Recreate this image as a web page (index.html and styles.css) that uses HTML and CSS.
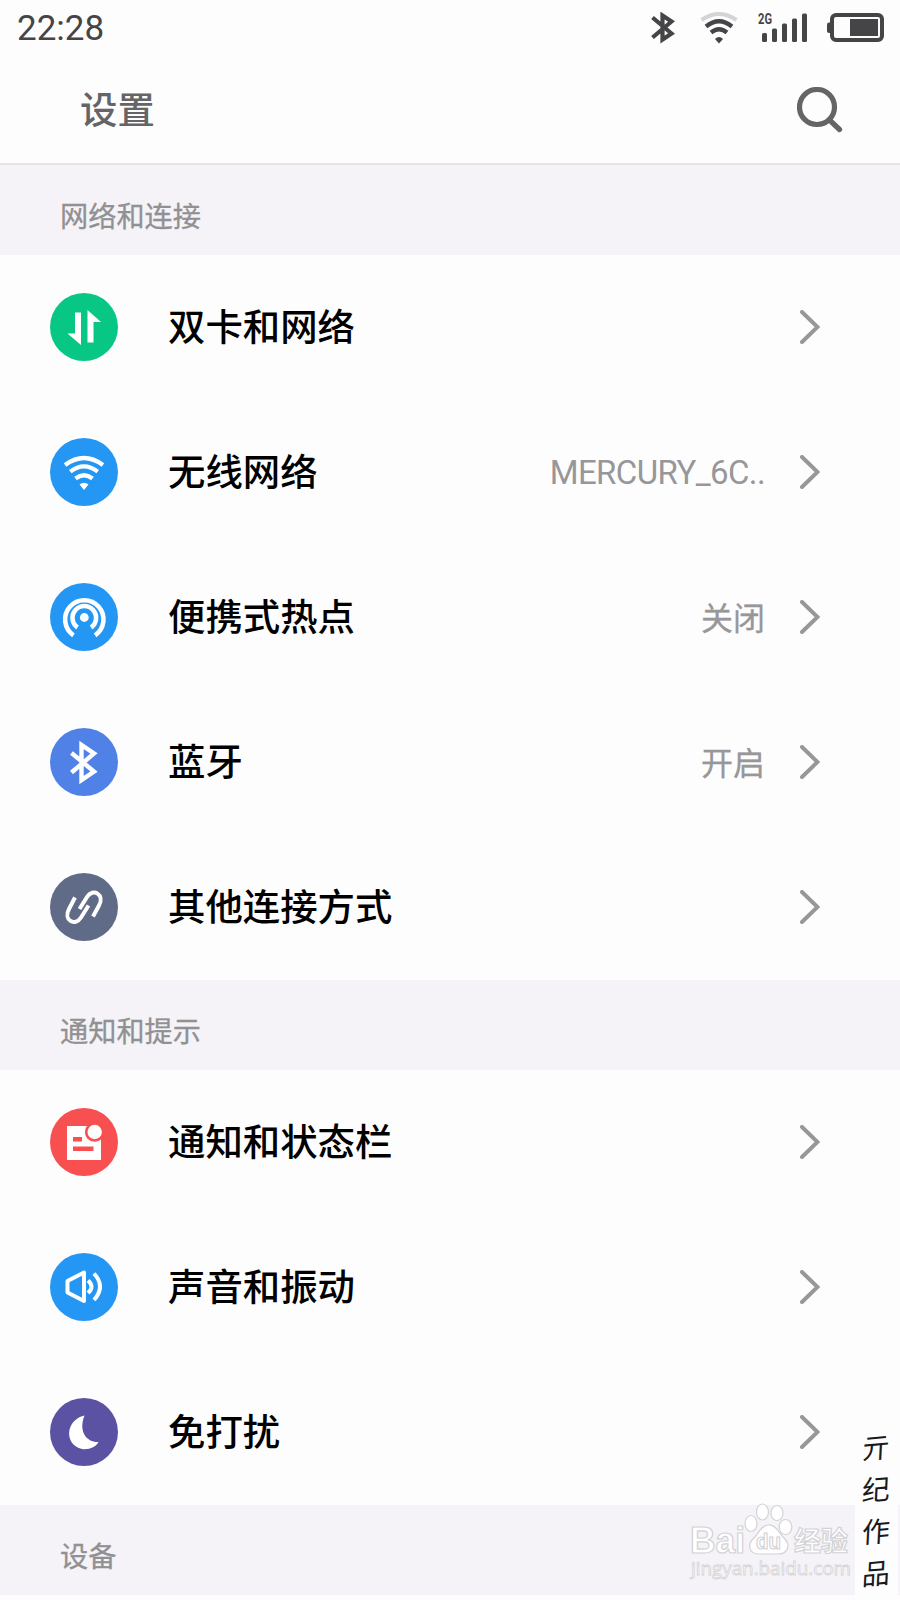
FILE: index.html
```html
<!DOCTYPE html>
<html lang="zh-CN">
<head>
<meta charset="utf-8">
<title>设置</title>
<link rel="stylesheet" href="styles.css">
</head>
<body>
<svg class="defs" width="0" height="0">
  <symbol id="chevron" viewBox="0 0 20 34"><path d="M2 2 17.500 17 2 32" fill="none" stroke="#979799" stroke-width="4" stroke-linecap="round"/></symbol>
</svg>
<div class="screen">
  <header class="top">
    <div class="status">
      <span class="clock">22:28</span>
      <div class="status-icons">
        <svg class="s-bt" width="24" height="32" viewBox="0 0 24 32"><path d="M1.500 5.500 20.500 21.500 11.500 27.500V3.500L20.500 9.500 1.500 25.500" fill="none" stroke="#454446" stroke-width="4.200"/></svg>
        <svg class="s-wifi" width="38" height="32" viewBox="0 0 38 32" fill="none"><path d="M1.500 8Q19 -4 36.500 8" stroke="#d4d3d5" stroke-width="4"/><path d="M6 14.500Q19 4 32 14.500M11 20.500Q19 14 27 20.500" stroke="#454446" stroke-width="4.300"/><path d="M15 27Q19 23 23 27L19 31.500Z" fill="#454446"/></svg>
        <svg class="s-signal" width="50" height="30" viewBox="0 0 50 30"><text x="0" y="10.500" class="net" textLength="14" lengthAdjust="spacingAndGlyphs">2G</text><g fill="#454446"><rect x="4" y="20" width="5" height="9" rx="1.500"/><rect x="14" y="15.500" width="5" height="13.500" rx="1.500"/><rect x="24" y="10.500" width="5" height="18.500" rx="1.500"/><rect x="34" y="5.500" width="5" height="23.500" rx="1.500"/><rect x="44" y="0.500" width="5" height="28.500" rx="1.500"/></g></svg>
        <svg class="s-battery" width="57" height="30" viewBox="0 0 57 30"><rect x="0" y="9.500" width="5" height="10.500" rx="2" fill="#454446"/><rect x="5" y="2" width="50" height="25" rx="4" fill="none" stroke="#454446" stroke-width="4"/><rect x="23" y="6" width="28" height="17" fill="#454446"/></svg>
      </div>
    </div>
    <div class="titlebar">
      <h1>设置</h1>
      <svg width="46" height="46" viewBox="0 0 46 46" fill="none" stroke="#656466" stroke-width="5.200"><circle cx="20" cy="20" r="17.500"/><path d="M32.500 33 42.500 42.500" stroke-linecap="round"/></svg>
    </div>
  </header>

  <h2 class="section">网络和连接</h2>
  <ul class="list">
    <li class="row"><svg class="icon green" viewBox="0 0 68 68" fill="#fff"><path d="M25 19.500H31V52L17.500 40.500H25Z"/><path d="M37.500 17 51 29H43.500V49.500H37.500Z"/></svg><span class="name">双卡和网络</span><svg class="chev"><use href="#chevron"/></svg></li>
    <li class="row"><svg class="icon blue" viewBox="0 0 68 68" fill="none" stroke="#fff" stroke-width="4.200"><path d="M15 27Q34 13 53 27M20.300 33.700Q34 23 47.700 33.700M25.500 40.500Q34 34 42.500 40.500"/><path d="M29.500 46.500Q34 43 38.500 46.500L34 52Z" fill="#fff" stroke="none"/></svg><span class="name">无线网络</span><span class="value latin">MERCURY_6C..</span><svg class="chev"><use href="#chevron"/></svg></li>
    <li class="row"><svg class="icon blue" viewBox="0 0 68 68" fill="none" stroke="#fff"><circle cx="34.300" cy="34.500" r="4.400" fill="#fff" stroke="none"/><path d="M23.500 52.300A19.200 19.200 0 1 1 45.100 52.300" stroke-width="4.600"/><path d="M27.500 44.500A11.800 11.800 0 1 1 41.100 44.500" stroke-width="4.600"/></svg><span class="name">便携式热点</span><span class="value">关闭</span><svg class="chev"><use href="#chevron"/></svg></li>
    <li class="row"><svg class="icon indigo" viewBox="0 0 68 68" fill="none" stroke="#fff" stroke-width="4.400"><path d="M21.500 25 44 43.500 31.500 52V17L44 25.500 21.500 44.500"/></svg><span class="name">蓝牙</span><span class="value">开启</span><svg class="chev"><use href="#chevron"/></svg></li>
    <li class="row"><svg class="icon slate" viewBox="0 0 68 68" fill="none" stroke="#fff" stroke-width="4"><path d="M25 24.500 19 36C13 47 25 54 31 44.500L38.500 32.500"/><path d="M43 43.500 49 32.500C55 21.500 43 14.500 37 24L29.500 36"/></svg><span class="name">其他连接方式</span><svg class="chev"><use href="#chevron"/></svg></li>
  </ul>

  <h2 class="section">通知和提示</h2>
  <ul class="list">
    <li class="row"><svg class="icon red" viewBox="0 0 68 68" fill="#fff"><path d="M17 18H51V52H17Z"/><path d="M38 17H53V31H48A9.500 9.500 0 0 1 38 17Z" fill="#f84f51"/><circle cx="44.700" cy="24" r="8.500" stroke="#f84f51" stroke-width="2.600"/><path d="M23 29H32V33.500H23ZM23 38.500H43.500V43H23Z" fill="#f84f51"/></svg><span class="name">通知和状态栏</span><svg class="chev"><use href="#chevron"/></svg></li>
    <li class="row"><svg class="icon blue" viewBox="0 0 68 68" fill="none" stroke="#fff" stroke-width="4" stroke-linejoin="round"><path d="M34 19.500V48L17.500 39.500V28Z"/><path d="M38 27.500Q45 33.500 38 40M44 20.500Q56 33.500 44 47"/></svg><span class="name">声音和振动</span><svg class="chev"><use href="#chevron"/></svg></li>
    <li class="row"><svg class="icon purple" viewBox="0 0 68 68" fill="#fff"><path d="M34.500 17.500C15 22 14 47 32 51C39 52 46 49 48.500 44C37 44.500 28 34 34.500 17.500Z"/></svg><span class="name">免打扰</span><svg class="chev"><use href="#chevron"/></svg></li>
  </ul>
  <h2 class="section">设备</h2>

  <svg class="watermark" width="170" height="100" viewBox="0 0 170 100" fill="#fff" stroke="#d3d2d5" stroke-width="1.200">
    <text class="wm-logo" x="3" y="53" textLength="55" lengthAdjust="spacingAndGlyphs">Bai</text>
    <ellipse cx="64" cy="23.500" rx="6" ry="8"/><ellipse cx="75.500" cy="12" rx="6" ry="8"/><ellipse cx="90" cy="13" rx="6" ry="7.500"/><ellipse cx="98.500" cy="27" rx="6.300" ry="7.500"/>
    <path d="M81 25C89 24 92 34 98 39C104 46 100 54 91 54H71C61 53 61 44 66 39C72 34 73 26 81 25Z"/>
    <text class="wm-du" x="69" y="49" textLength="25" lengthAdjust="spacingAndGlyphs">du</text>
    <text class="wm-cn" x="107" y="51" textLength="54" lengthAdjust="spacingAndGlyphs">经验</text>
    <text class="wm-url" x="4" y="75" textLength="160" lengthAdjust="spacingAndGlyphs">jingyan.baidu.com</text>
  </svg>
  <div class="signature"><span>亓</span><span>纪</span><span>作</span><span>品</span></div>
</div>
</body>
</html>
```
FILE: styles.css
```css
* { box-sizing: border-box; }
body { margin: 0; background: #fdfdfe; font-family: Roboto, "Noto Sans CJK SC", sans-serif; }
.screen { position: relative; width: 900px; height: 1600px; overflow: hidden; }
.defs { display: block; position: absolute; }
.top { height: 165px; border-bottom: 2px solid #e3e2e4; }
.status { display: flex; justify-content: space-between; height: 56px; padding: 0 16px 0 17px; }
.clock { font-size: 35px; line-height: 57px; color: #454446; }
.status-icons { display: flex; align-items: flex-start; padding-top: 12px; }
.s-wifi { margin-left: 25px; }
.s-signal { margin: 1px 0 0 20px; overflow: visible; }
.s-battery { margin: 1px 0 0 19px; }
.net { font: 700 14px Roboto, sans-serif; fill: #454446; }
.titlebar { display: flex; justify-content: space-between; align-items: center; height: 107px; padding: 0 57px 0 80px; }
h1 { margin: 0; padding-bottom: 4px; font-family: "Noto Sans CJK SC", sans-serif; font-size: 37.400px; font-weight: 500; line-height: 54px; color: #656466; }
.section { height: 90px; margin: 0; padding-left: 60px; background: #f5f3f7; font-family: "Noto Sans CJK SC", sans-serif; font-size: 28.200px; font-weight: 400; line-height: 99px; color: #919093; -webkit-text-stroke: .3px #919093; }
.list { margin: 0; padding: 0; list-style: none; }
.row { display: flex; align-items: center; height: 145px; padding: 0 79px 2px 50px; }
.icon { flex: none; width: 68px; height: 68px; border-radius: 50%; }
.green { background: #08c785; }
.blue { background: #2497f4; }
.indigo { background: #5081e7; }
.slate { background: #606b87; }
.red { background: #f84f51; }
.purple { background: #5b52a3; }
.name { flex: 1; margin-left: 50px; padding-bottom: 4px; font-family: "Noto Sans CJK SC", sans-serif; font-size: 37.400px; font-weight: 500; line-height: 54px; color: #000; }
.value { margin-right: 35px; padding-bottom: 2px; font-family: "Noto Sans CJK SC", sans-serif; font-size: 32px; line-height: 46px; color: #979799; -webkit-text-stroke: .3px #979799; }
.latin { padding: 3px 0 0; font-family: Roboto, sans-serif; font-size: 33px; letter-spacing: -.6px; -webkit-text-stroke: 0; }
.chev { flex: none; width: 20px; height: 34px; margin-right: 1px; }
.watermark { position: absolute; left: 687px; top: 1500px; }
.wm-logo { font: 700 36px "Liberation Sans", sans-serif; }
.wm-du { font: 700 22px "Liberation Sans", sans-serif; }
.wm-cn { font: 700 27px "Noto Sans CJK SC", sans-serif; }
.wm-url { font: 400 19px "Open Sans", sans-serif; stroke-width: .8px; }
.signature { position: absolute; left: 855px; top: 1425px; width: 43px; height: 175px; display: flex; flex-direction: column; align-items: center; background: #fdfdfe; font-family: "Noto Sans CJK SC", sans-serif; font-size: 28px; line-height: 42px; color: #19191b; }
.signature span { transform: rotate(-5deg) skewX(-8deg); }
```
